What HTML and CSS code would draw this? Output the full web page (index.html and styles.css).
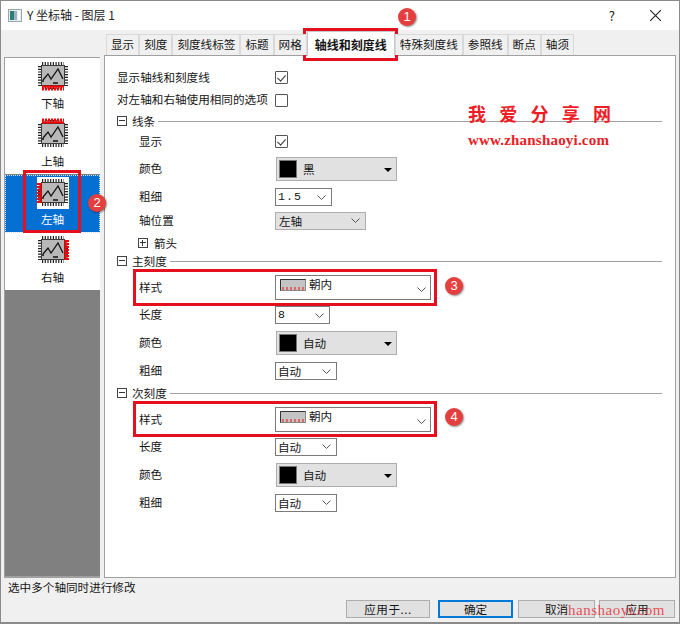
FILE: index.html
```html
<!DOCTYPE html>
<html lang="zh-CN">
<head>
<meta charset="utf-8">
<title>Y 坐标轴 - 图层 1</title>
<link rel="stylesheet" href="styles.css">
</head>
<body>
<svg class="defs" width="0" height="0" aria-hidden="true">
  <symbol id="chip" viewBox="0 0 32 32">
    <path class="pins" d="M5 3.500H27M5 27.500H27M2.500 6V26M29.500 6V26"/>
    <rect class="chip-body" x="4.500" y="5.500" width="23" height="20"/>
    <polyline class="chip-line" points="6,20 11,14 14,19 21,9 26,19"/>
    <path class="chip-line" d="M5 21H7M16 23H21"/>
  </symbol>
  <symbol id="chev" viewBox="0 0 9 5">
    <path class="chev-line" d="M.5 .5L4.500 4.500L8.500 .5"/>
  </symbol>
  <symbol id="ticks" viewBox="0 0 26 12">
    <rect class="tick-body" x=".5" y=".5" width="25" height="11"/>
    <path class="tick-edge" d="M.5 11.500V.5H25.500"/>
    <path class="tick-red" d="M3 11V8M7 11V8M11 11V8M15 11V8M19 11V8M23 11V8"/>
  </symbol>
</svg>
<div class="window">
  <header class="titlebar">
    <svg class="app-icon" viewBox="0 0 14 13">
      <rect x=".5" y=".5" width="13" height="12" fill="#e8eef0" stroke="#9aa6aa"/>
      <rect x="2" y="2" width="4" height="9" fill="#2f7f78"/>
      <rect x="6" y="2" width="3" height="9" fill="#9db4c4"/>
      <rect x="10" y="2" width="2" height="9" fill="#fff"/>
    </svg>
    <span class="title">Y 坐标轴 - 图层 1</span>
    <span class="help">?</span>
    <svg class="close" viewBox="0 0 10 10"><path d="M0 0L10 10M10 0L0 10"/></svg>
  </header>
  <div class="content">
    <aside class="axis-list">
      <div class="axis"><svg class="chip"><use href="#chip"/><path class="red-bar" d="M5 26.500H27"/><path class="red-teeth" d="M5 29H27"/></svg><span>下轴</span></div>
      <div class="axis"><svg class="chip"><use href="#chip"/><path class="red-bar" d="M5 4.500H27"/><path class="red-teeth" d="M5 2H27"/></svg><span>上轴</span></div>
      <div class="axis selected"><svg class="chip"><use href="#chip"/><path class="red-bar" d="M3.500 6V26"/><path class="red-teeth" d="M1.500 6V26"/></svg><span>左轴</span></div>
      <div class="axis"><svg class="chip"><use href="#chip"/><path class="red-bar" d="M28.500 6V26"/><path class="red-teeth" d="M30.500 6V26"/></svg><span>右轴</span></div>
    </aside>
    <main class="main">
      <nav class="tabs">
        <span class="tab">显示</span><span class="tab">刻度</span><span class="tab">刻度线标签</span><span class="tab">标题</span><span class="tab">网格</span><span class="tab active">轴线和刻度线</span><span class="tab">特殊刻度线</span><span class="tab">参照线</span><span class="tab">断点</span><span class="tab">轴须</span>
      </nav>
      <section class="panel">
        <div class="form">
          <div class="row top"><label>显示轴线和刻度线</label><span class="check on"></span></div>
          <div class="row top"><label>对左轴和右轴使用相同的选项</label><span class="check"></span></div>

          <div class="section"><span class="tree minus"></span><span>线条</span><i class="rule"></i></div>
          <div class="row"><label>显示</label><span class="check on"></span></div>
          <div class="row"><label>颜色</label><div class="color-select"><b class="swatch"></b>黑</div></div>
          <div class="row"><label>粗细</label><div class="select w57 mono">1.5<svg class="chev"><use href="#chev"/></svg></div></div>
          <div class="row"><label>轴位置</label><div class="select w91 flat">左轴<svg class="chev"><use href="#chev"/></svg></div></div>
          <div class="row arrow-row"><span class="tree plus"></span><span>箭头</span></div>

          <div class="section"><span class="tree minus"></span><span>主刻度</span><i class="rule"></i></div>
          <div class="row"><label>样式</label><div class="style-select"><svg class="ticks"><use href="#ticks"/></svg>朝内<svg class="chev"><use href="#chev"/></svg></div></div>
          <div class="row"><label>长度</label><div class="select w55 mono">8<svg class="chev"><use href="#chev"/></svg></div></div>
          <div class="row"><label>颜色</label><div class="color-select"><b class="swatch"></b>自动</div></div>
          <div class="row"><label>粗细</label><div class="select w62">自动<svg class="chev"><use href="#chev"/></svg></div></div>

          <div class="section"><span class="tree minus"></span><span>次刻度</span><i class="rule"></i></div>
          <div class="row"><label>样式</label><div class="style-select"><svg class="ticks"><use href="#ticks"/></svg>朝内<svg class="chev"><use href="#chev"/></svg></div></div>
          <div class="row"><label>长度</label><div class="select w62">自动<svg class="chev"><use href="#chev"/></svg></div></div>
          <div class="row"><label>颜色</label><div class="color-select"><b class="swatch"></b>自动</div></div>
          <div class="row"><label>粗细</label><div class="select w62">自动<svg class="chev"><use href="#chev"/></svg></div></div>
        </div>
      </section>
    </main>
  </div>
  <footer class="footer">
    <div class="status">选中多个轴同时进行修改</div>
    <div class="buttons">
      <button class="btn apply-to">应用于...</button>
      <button class="btn ok">确定</button>
      <button class="btn cancel">取消</button>
      <button class="btn apply">应用</button>
    </div>
  </footer>

  <div class="mark box-tab"></div>
  <div class="mark box-axis"></div>
  <div class="mark box-major"></div>
  <div class="mark box-minor"></div>
  <span class="badge b1">1</span>
  <span class="badge b2">2</span>
  <span class="badge b3">3</span>
  <span class="badge b4">4</span>
  <div class="wm-title"><span>我</span><span>爱</span><span>分</span><span>享</span><span>网</span></div>
  <div class="wm-url">www.zhanshaoyi.com</div>
  <div class="wm-bottom">hanshaoyi.com</div>
</div>
</body>
</html>
```
FILE: styles.css
```css
* { box-sizing: border-box; }
html, body { margin: 0; padding: 0; }
body {
  font: 11.600px/16px "Noto Sans CJK SC", "Liberation Sans", sans-serif;
  color: #151515;
  background: #fff;
}
.defs { position: absolute; }
.window {
  position: relative;
  width: 680px;
  height: 624px;
  overflow: hidden;
  display: flex;
  flex-direction: column;
  background: #f0f0f0;
  border: 1px solid #8a8a8a;
  border-bottom-width: 2px;
}

/* title bar */
.titlebar {
  height: 29px;
  flex: none;
  display: flex;
  align-items: center;
  background: #fff;
  padding: 0 18px 0 7px;
}
.app-icon { width: 14px; height: 13px; margin-right: 5px; }
.title { font-size: 12px; color: #222; margin-top: -1px; }
.help { margin-left: auto; margin-right: 35px; font-size: 13px; }
.close { width: 11px; height: 11px; }
.close path { stroke: #222; stroke-width: 1; fill: none; }

/* layout */
.content { height: 548px; flex: none; display: flex; padding-left: 3px; }

/* left list */
.axis-list {
  width: 96px;
  height: 521px;
  margin-top: 27px;
  background: #808080;
  border: 1px solid #a0a0a0;
  border-right-width: 0;
  border-bottom-width: 2px;
}
.axis {
  height: 58px;
  background: #fff;
  display: flex;
  flex-direction: column;
  align-items: center;
  padding-top: 2px;
}
.axis span { margin-top: 1px; line-height: 20px; }
.axis.selected { background: #0670d2; color: #fff; outline: 1px dotted #cfe3f7; outline-offset: -1px; margin-top: 1px; margin-bottom: -1px; }
.axis.selected span { margin-top: 0; }
.axis.selected .chip { background: #fff; }
.chip { width: 32px; height: 32px; display: block; }
.pins { fill: none; stroke: #222; stroke-width: 3; stroke-dasharray: 1.200 1.500; }
.chip-body { fill: #b8b8b8; stroke: #3a3a3a; stroke-width: 1; }
.chip-line { fill: none; stroke: #111; stroke-width: 1.300; }
.red-bar { stroke: #f00; stroke-width: 2; fill: none; }
.red-teeth { stroke: #f00; stroke-width: 3; stroke-dasharray: 2 1; fill: none; }

/* tabs */
.main { width: 572px; margin-left: 4px; flex: none; display: flex; flex-direction: column; }
.tabs {
  height: 25px;
  flex: none;
  display: flex;
  align-items: flex-end;
  padding-left: 2px;
  position: relative;
  z-index: 1;
}
.tab {
  height: 21px;
  padding: 1px 4px 0;
  background: #f0f0f0;
  border: 1px solid #d9d9d9;
  border-bottom: 0;
  white-space: nowrap;
  line-height: 16px;
}
.tab.active {
  height: 25px;
  width: 88px;
  margin-bottom: -1px;
  padding: 5px 0 0;
  text-align: center;
  font-size: 12px;
  background: #fff;
  font-weight: 700;
  border-color: #c8c8c8;
}

/* panel */
.panel {
  height: 523px;
  background: #fff;
  border: 1px solid #a0a0a0;
  padding-left: 12px;
}
.form {
  margin-top: 10px;
  display: grid;
  grid-template-columns: 1fr;
  grid-template-rows: 23px 22px 20px 21px 34px 22px 25px 19px 18px 35px 20px 36px 20px 24px 29px 25px 32px 23px;
}
.row { display: flex; align-items: center; padding-left: 22px; min-width: 0; }
.row > label { width: 136px; flex: none; margin-top: -2px; }
.row.top { padding-left: 0; }
.row.top > label { width: 158px; }
.row.arrow-row { padding-left: 21px; }
.section { display: flex; align-items: center; padding-right: 13px; }
.section .tree { margin-right: 5px; }
.rule { flex: 1; height: 1px; background: #a0a0a0; margin-left: 3px; }

.tree { position: relative; width: 10px; height: 10px; border: 1px solid #444; flex: none; }
.tree::before { content: ""; position: absolute; left: 1px; right: 1px; top: 3px; height: 1px; background: #333; }
.tree.plus { margin-right: 6px; }
.tree.plus::after { content: ""; position: absolute; top: 1px; bottom: 1px; left: 3px; width: 1px; background: #333; }

.check { position: relative; width: 13px; height: 13px; border: 1px solid #555; border-radius: 1px; background: #fff; flex: none; }
.check.on::after {
  content: "";
  position: absolute;
  left: 3px;
  top: 1px;
  width: 4px;
  height: 7px;
  border: solid #333;
  border-width: 0 1px 1px 0;
  transform: rotate(42deg);
}

.select {
  position: relative;
  height: 18px;
  display: flex;
  align-items: center;
  padding-left: 2px;
  background: #fff;
  border: 1px solid #7a7a7a;
  flex: none;
}
.select .chev { margin-left: auto; margin-right: 5px; }
.select.flat { background: #e1e1e1; border-color: #adadad; padding-left: 3px; }
.select.mono { font-family: "Liberation Mono", monospace; letter-spacing: 1px; }
.w55 { width: 55px; }
.w57 { width: 57px; }
.w62 { width: 62px; }
.w91 { width: 91px; }
.chev { width: 9px; height: 5px; flex: none; }
.chev-line { fill: none; stroke: #555; stroke-width: 1; }

.color-select {
  position: relative;
  width: 121px;
  height: 24px;
  margin-left: 1px;
  display: flex;
  align-items: center;
  padding-left: 2px;
  background: #e1e1e1;
  border: 1px solid #adadad;
}
.color-select::after {
  content: "";
  position: absolute;
  right: 3px;
  top: 10px;
  border: 4px solid transparent;
  border-top: 4px solid #000;
  border-bottom: 0;
  margin-right: 1px;
}
.swatch { width: 18px; height: 18px; margin-right: 6px; background: #000; border: 1px solid #777; }

.style-select {
  position: relative;
  width: 156px;
  height: 25px;
  display: flex;
  align-items: flex-start;
  padding: 0 0 0 4px;
  background: #fff;
  border: 1px solid #7a7a7a;
  line-height: 16px;
}
.ticks { width: 26px; height: 12px; margin: 3px 3px 0 0; flex: none; }
.tick-body { fill: #c4c4c4; stroke: #8a8a8a; }
.tick-edge { fill: none; stroke: #333; }
.tick-red { fill: none; stroke: #ee1111; stroke-width: 1; }
.style-select .chev { position: absolute; right: 4px; top: 11px; }

/* footer */
.footer { flex: 1; display: flex; flex-direction: column; }
.status { padding: 0 0 0 7px; line-height: 18px; height: 21px; }
.buttons { display: flex; padding-left: 345px; margin-top: 1px; }
.btn {
  height: 18px;
  padding: 0;
  font: inherit;
  line-height: 14px;
  color: #151515;
  background: #e1e1e1;
  border: 1px solid #adadad;
  border-radius: 0;
}
.apply-to { width: 84px; margin-right: 8px; letter-spacing: .5px; }
.ok { width: 75px; margin-right: 5px; border: 2px solid #0078d7; }
.cancel { width: 77px; margin-right: 4px; }
.apply { width: 76px; }

/* annotations over the dialog */
.mark { position: absolute; border: 3px solid #e60f1e; }
.box-tab { left: 302px; top: 27px; width: 95px; height: 33px; }
.box-axis { left: 22px; top: 169px; width: 58px; height: 63px; }
.box-major { left: 132px; top: 268px; width: 304px; height: 37px; }
.box-minor { left: 132px; top: 400px; width: 304px; height: 36px; }
.badge {
  position: absolute;
  width: 18px;
  height: 18px;
  border-radius: 50%;
  background: #e53e3e;
  box-shadow: 1px 1px 2px rgba(0, 0, 0, .45);
  color: #fff;
  font: 13px/18px "Liberation Sans", sans-serif;
  text-align: center;
}
.b1 { left: 397px; top: 7px; }
.b2 { left: 87px; top: 193px; }
.b3 { left: 444px; top: 276px; }
.b4 { left: 444px; top: 407px; }
.wm-title {
  position: absolute;
  left: 467px;
  top: 101px;
  width: 143px;
  display: flex;
  justify-content: space-between;
  font: 700 18px/22px "Noto Sans CJK SC", sans-serif;
  color: #ee1c25;
}
.wm-url {
  position: absolute;
  left: 467px;
  top: 130px;
  font: 700 15px/18px "Liberation Serif", serif;
  letter-spacing: .2px;
  color: #ee1c25;
}
.wm-bottom {
  position: absolute;
  left: 567px;
  top: 600px;
  font: 15px/18px "Liberation Serif", serif;
  letter-spacing: .5px;
  color: rgba(230, 40, 50, .8);
  pointer-events: none;
}
```
